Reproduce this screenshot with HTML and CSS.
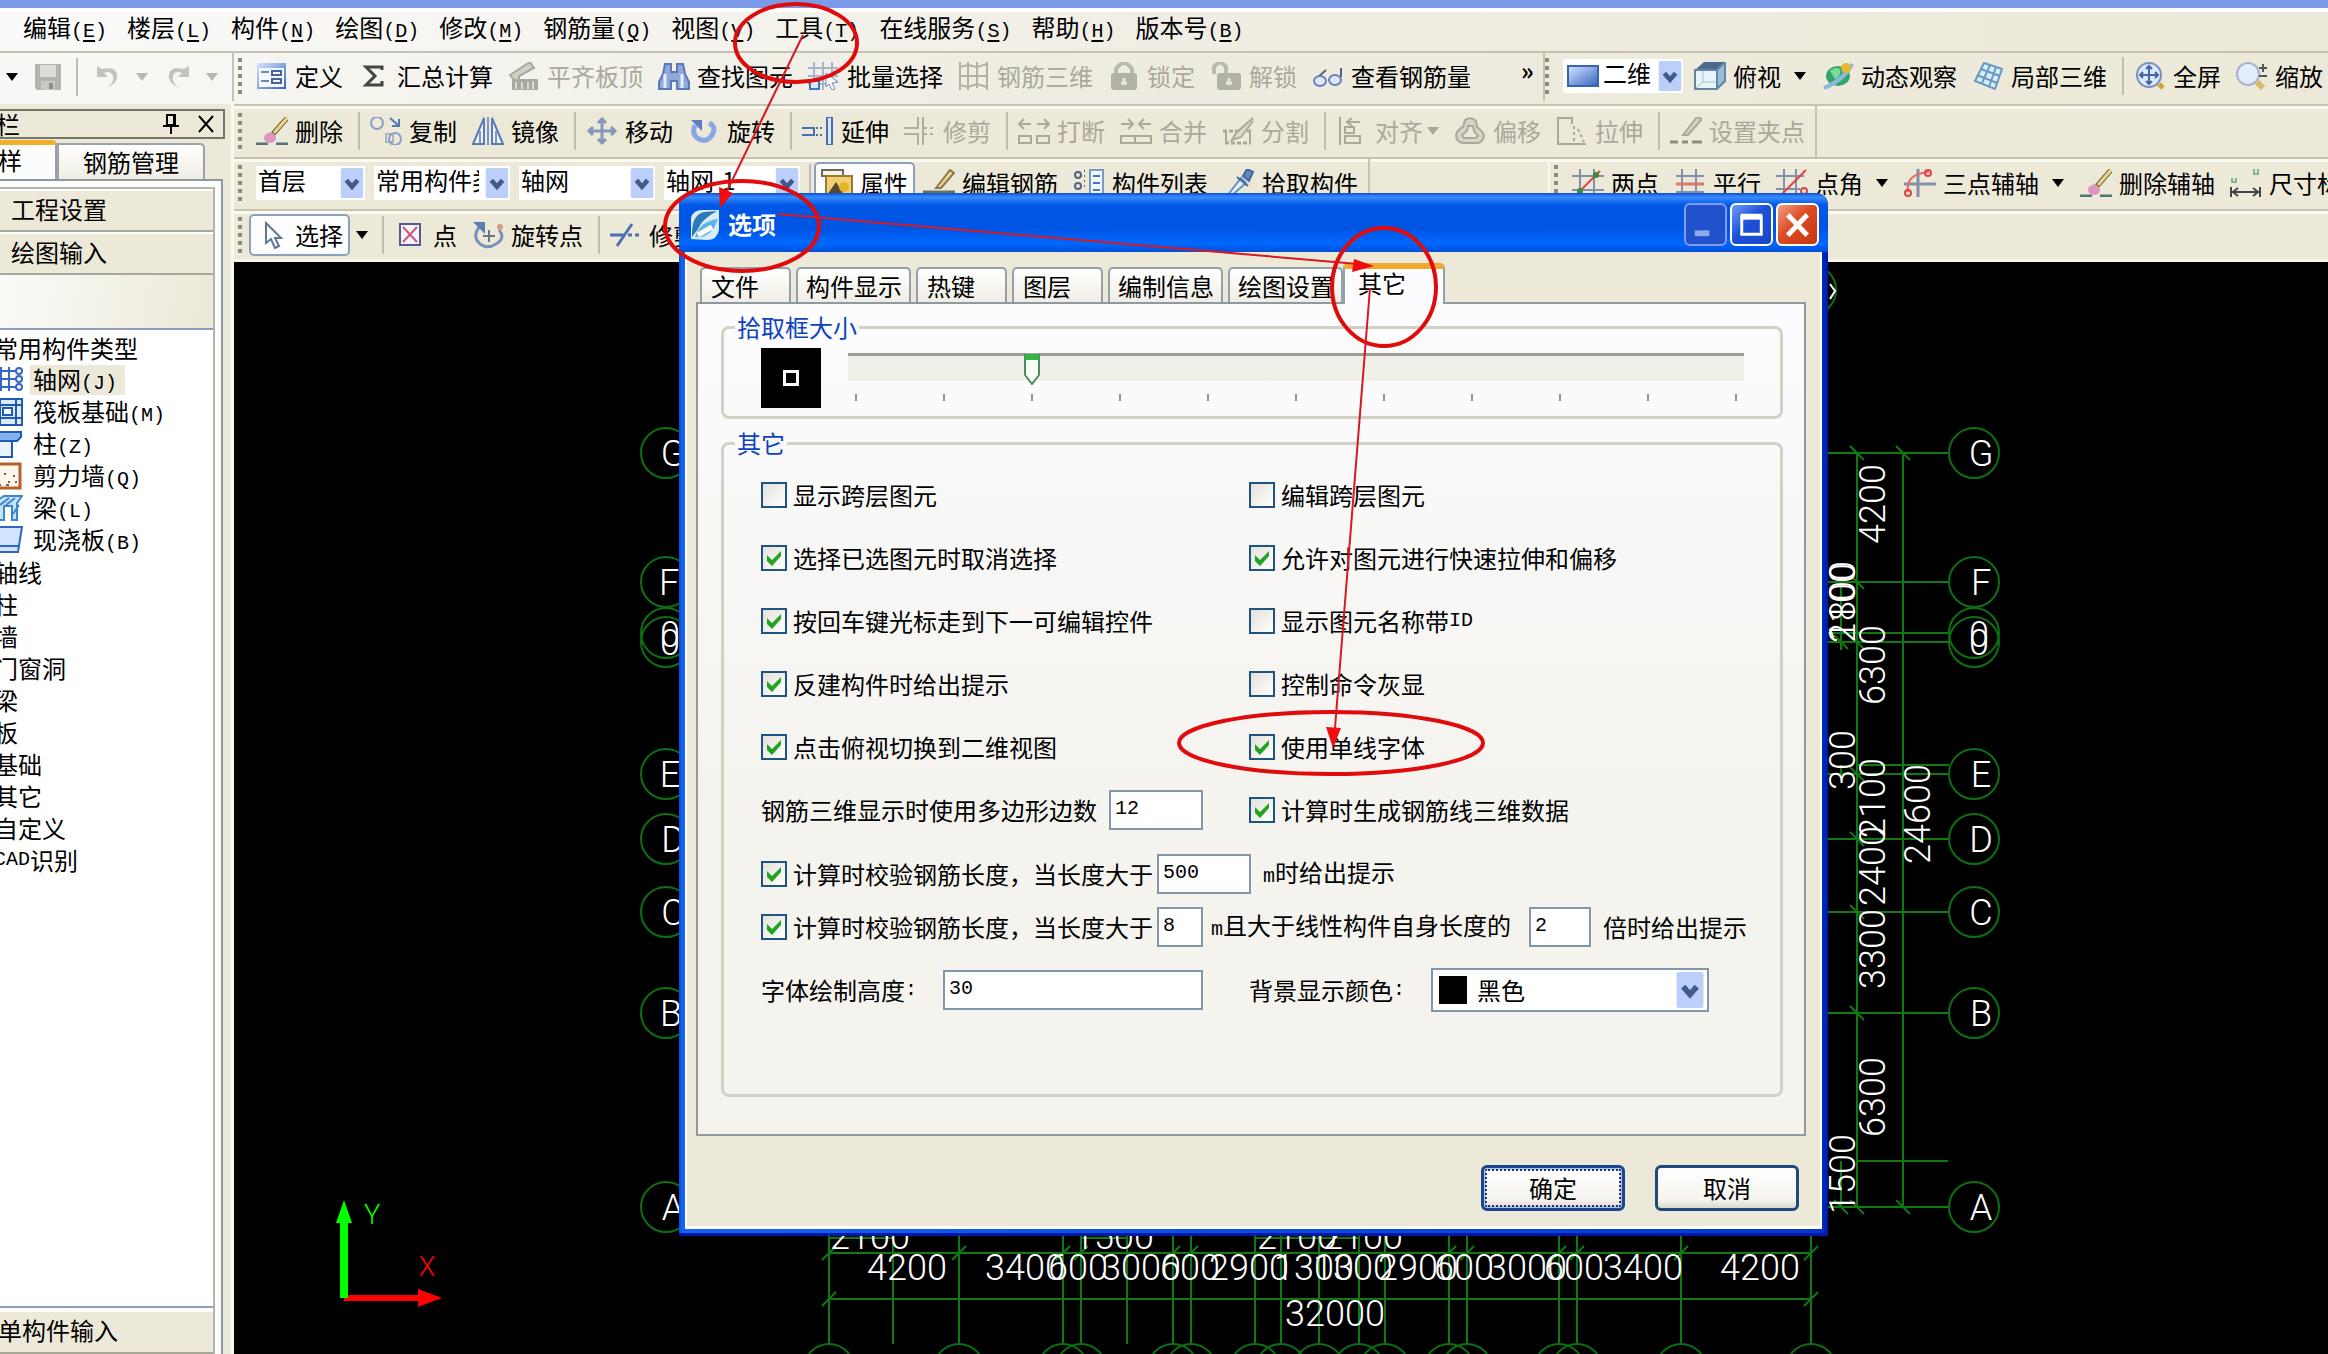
FILE: index.html
```html
<!DOCTYPE html>
<html lang="zh-CN">
<head>
<meta charset="utf-8">
<title>选项</title>
<link rel="stylesheet" href="styles.css">
</head>
<body>
<svg class="defs" aria-hidden="true">
  <defs>
    <linearGradient id="g-blue" x1="0" y1="0" x2="1" y2="1"><stop offset="0" stop-color="#d6e6ff"/><stop offset="1" stop-color="#3563c0"/></linearGradient>
  </defs>
  <symbol id="i-save" viewBox="0 0 32 28"><path d="M3 1h26v26H5l-2-2z" fill="#b4b4af"/><path d="M8 2h16v12H8z" fill="#dcdcd8"/><path d="M9 18h14v9H9z" fill="#c8c8c4"/><path d="M17 20h4v6h-4z" fill="#8e8e8a"/></symbol>
  <symbol id="i-undo" viewBox="0 0 32 28"><path d="M5 3v11h11l-4-4q7-3 9 3t-6 12q12-6 10-14T10 6z" fill="#c2c2bd"/></symbol>
  <symbol id="i-redo" viewBox="0 0 32 28"><path d="M27 3v11H16l4-4q-7-3-9 3t6 12Q5 19 7 11T22 6z" fill="#c2c2bd"/></symbol>
  <symbol id="i-define" viewBox="0 0 32 28"><path d="M1 1h29v26H1z" fill="url(#g-blue)"/><path d="M3 6h25v19H3z" fill="#f4f8ff"/><path d="M5 10h8m-8 9h8" stroke="#6d87bd" stroke-width="2"/><path d="M16 9h9v4h-9zm0 8h9v4h-9z" fill="none" stroke="#48629c" stroke-width="2"/></symbol>
  <symbol id="i-sigma" viewBox="0 0 32 28"><path d="M24 8V5H8l9 9-9 9h16v-4" fill="none" stroke="#444" stroke-width="3"/></symbol>
  <symbol id="i-slab" viewBox="0 0 32 28"><path d="M2 13 22 0l4 6-15 8v4H6z" fill="#d2d0c4" stroke="#a9a89c" stroke-width="2"/><path d="M4 17h26v11H4z" fill="#aaa99f"/><path d="M8 20v7m6-7v7m6-7v7m5-8v8" stroke="#dddbd0" stroke-width="2"/></symbol>
  <symbol id="i-find" viewBox="0 0 32 28"><path d="M7 2h6v8h6V2h6l2 10 4 8v7H19v-8h-6v8H1v-7l4-8z" fill="#8fa9dc" stroke="#5a78b4" stroke-width="2"/><path d="M7 12v14m17-14v14" stroke="#e3edff" stroke-width="3"/></symbol>
  <symbol id="i-batch" viewBox="0 0 32 28"><path d="M6 0v28M15 0v28M24 0v20M0 6h30M0 14h30M0 22h20" stroke="#a8b4cc" stroke-width="2"/><path d="M2 19h9v8H2z" fill="#dbe8ff" stroke="#4674c4" stroke-width="2"/><path d="m18 11 12 9-6 1 3 6-3 1-3-6-3 3z" fill="#fff" stroke="#6d87b8"/></symbol>
  <symbol id="i-rebar" viewBox="0 0 32 28"><path d="M2 0v28M10 0v28M19 0v26M29 0v28M2 5l8-2 9 2 10-3M2 14h27M2 23l8 2 9-3 10 3" fill="none" stroke="#b3b1a6" stroke-width="2"/></symbol>
  <symbol id="i-lock" viewBox="0 0 32 28"><path d="M8 12V7q8-12 16 0v5" fill="none" stroke="#bab9b0" stroke-width="4"/><rect x="3" y="11" width="26" height="17" rx="3" fill="#b2b1a8"/><path d="M16 16v7m-3-2h6" stroke="#e8e6da" stroke-width="3"/></symbol>
  <symbol id="i-unlock" viewBox="0 0 32 28"><path d="M4 12V5q6-9 12 0v6" fill="none" stroke="#bab9b0" stroke-width="4"/><rect x="7" y="11" width="24" height="17" rx="3" fill="#b2b1a8"/><path d="M19 16v7m-3-2h6" stroke="#e8e6da" stroke-width="3"/></symbol>
  <symbol id="i-glasses" viewBox="0 0 32 28"><path d="m14 8-9 8M29 6v9" stroke="#54608c" stroke-width="2"/><ellipse cx="8" cy="19" rx="6" ry="5" fill="#dde7ff" stroke="#6a7fb8" stroke-width="2"/><ellipse cx="23" cy="18" rx="6" ry="5" fill="#dde7ff" stroke="#6a7fb8" stroke-width="2"/></symbol>
  <symbol id="i-screen" viewBox="0 0 32 28"><path d="M1 4h30v20H1z" fill="url(#g-blue)" stroke="#3864b2" stroke-width="2"/></symbol>
  <symbol id="i-cube" viewBox="0 0 32 28"><path d="M1 8 10 0h21l-8 8z" fill="#4b6a8e"/><path d="M1 8h22v19H1z" fill="#e7f5fa" stroke="#64869e" stroke-width="2"/><path d="m23 8 8-8v19l-8 8z" fill="#93bfd8" stroke="#64869e" stroke-width="2"/><path d="M9 9v11l-7 6m7-6h13" stroke="#9fc2d2" fill="none"/></symbol>
  <symbol id="i-orbit" viewBox="0 0 32 28"><ellipse cx="16" cy="14" rx="12" ry="10" fill="#35a56a"/><path d="M8 9q8-6 10-1t-5 9z" fill="#7bdc9d"/><path d="M2 26Q22 18 30 2" stroke="#8fb6dc" stroke-width="4" fill="none"/><circle cx="24" cy="6" r="5" fill="#e8b832"/></symbol>
  <symbol id="i-local" viewBox="0 0 32 28"><path d="m12 1 18 6-7 20-20-8z" fill="#d6f0fb" stroke="#6b98c0" stroke-width="2"/><path d="m18 3-8 18m14-16-7 20M9 7l19 7M5 13l20 8" stroke="#6b98c0" stroke-width="2"/></symbol>
  <symbol id="i-full" viewBox="0 0 32 28"><circle cx="15" cy="13" r="12" fill="#dce8fb" stroke="#7890bc" stroke-width="2"/><path d="M15 4v18M6 13h18m-12-6 3-3 3 3m-6 12 3 3 3-3M9 10l-3 3 3 3m12-6 3 3-3 3" fill="none" stroke="#4465a4" stroke-width="2"/><path d="m25 22 4 4" stroke="#d2a23c" stroke-width="5"/></symbol>
  <symbol id="i-zoom" viewBox="0 0 32 28"><circle cx="12" cy="12" r="11" fill="#e3eefc" stroke="#a5b4cc" stroke-width="2"/><path d="m21 20 6 6" stroke="#d8b860" stroke-width="6"/><path d="M27 2v8m-4-4h8m-8 8h8" stroke="#555" stroke-width="2"/></symbol>
  <symbol id="i-erase" viewBox="0 0 32 28"><path d="M0 27h12m8 0h12" stroke="#4d777b" stroke-width="3"/><path d="M31 1 17 17" stroke="#6e6337" stroke-width="5"/><path d="M31 1 18 16" stroke="#ecd58c" stroke-width="3"/><path d="m14 15 6 5-4 4-7-5z" fill="#8ba6e0"/><ellipse cx="14" cy="21" rx="6" ry="5" fill="#df95c0"/></symbol>
  <symbol id="i-copy" viewBox="0 0 32 28"><circle cx="7" cy="6" r="6" fill="none" stroke="#8ba0c8" stroke-width="2"/><path d="m20 1 9 8m0-7v7h-7" fill="none" stroke="#5076b4" stroke-width="2"/><path d="M16 17h7v8h-7z" fill="none" stroke="#a8b2ca" stroke-width="2"/><circle cx="25" cy="22" r="6" fill="none" stroke="#8ba0c8" stroke-width="2"/></symbol>
  <symbol id="i-mirror" viewBox="0 0 32 28"><path d="M12 1v26H1zM20 1v26h11z" fill="#eaf1ff" stroke="#5a7ab8" stroke-width="2"/><path d="M16 0v28M8 14v12m16-12v12" stroke="#7d95c4" stroke-width="2"/></symbol>
  <symbol id="i-move" viewBox="0 0 32 28"><path d="M16 3v22M4 14h24M12 6l4-4 4 4m-8 16 4 4 4-4M7 10l-4 4 4 4m18-8 4 4-4 4" fill="none" stroke="#8598b8" stroke-width="3"/></symbol>
  <symbol id="i-rotate" viewBox="0 0 32 28"><path d="M7 8q-4 10 4 14t13-4-3-12" fill="none" stroke="#88a6e6" stroke-width="5"/><path d="M3 3h11v11z" fill="#5d7dc4"/></symbol>
  <symbol id="i-extend" viewBox="0 0 32 28"><path d="M0 11h12v7H0" fill="none" stroke="#4a6fb4" stroke-width="2"/><path d="M14 11h8m-8 7h8" stroke="#4a6fb4" stroke-width="2" stroke-dasharray="2"/><path d="M25 0h5v28h-5z" fill="#d8e6ff" stroke="#4a6fb4" stroke-width="2"/></symbol>
  <symbol id="i-trim" viewBox="0 0 32 28"><path d="M0 11h14V0m5 0v28m-5 0V17H0" fill="none" stroke="#b0aea0" stroke-width="2"/><path d="M20 11h12m-12 6h12" stroke="#b0aea0" stroke-width="2" stroke-dasharray="3"/></symbol>
  <symbol id="i-break" viewBox="0 0 32 28"><path d="M1 19h12v7H1zm18 0h12v7H19zM1 7h12M6 2 1 7l5 5m13-5h12m-5-5 5 5-5 5" fill="none" stroke="#aaa99c" stroke-width="2"/></symbol>
  <symbol id="i-merge" viewBox="0 0 32 28"><path d="M1 19h14v7H1zm14 0h16v7H15zM1 7h12M8 2l5 5-5 5m23-5H19m5-5-5 5 5 5" fill="none" stroke="#aaa99c" stroke-width="2"/></symbol>
  <symbol id="i-split" viewBox="0 0 32 28"><path d="M1 14h29M3 26h26" stroke="#aaa99c" stroke-width="3" stroke-dasharray="4 2"/><path d="M31 1 14 16l-4 7 9-3L31 4M4 14v12m24-12v12" fill="#dedbcc" stroke="#aaa99c" stroke-width="2"/></symbol>
  <symbol id="i-align" viewBox="0 0 32 28"><path d="M4 0v28M9 10h9v6H9zm0 9h15v7H9zM10 5h14m-8-4-5 4 5 4" fill="none" stroke="#aaa99c" stroke-width="2"/></symbol>
  <symbol id="i-offset" viewBox="0 0 32 28"><path d="M11 3q6-4 11 1l1 6q6 4 7 9-2 8-9 7H9q-7-1-7-8 2-6 7-8z" fill="#d7d5c9" stroke="#aaa99c" stroke-width="2"/><path d="M14 9h5l1 5 4 5-2 2H10l-2-3 5-4z" fill="#ece9d8" stroke="#aaa99c" stroke-width="2"/></symbol>
  <symbol id="i-stretch" viewBox="0 0 32 28"><path d="M16 7V1H2v26h28" fill="none" stroke="#aaa99c" stroke-width="2"/><path d="M18 9v15m4-12 6 13" stroke="#aaa99c" stroke-width="2" stroke-dasharray="3"/></symbol>
  <symbol id="i-grip" viewBox="0 0 32 28"><path d="m13 18 14-18 5 2-14 16z" fill="#d4d2c6" stroke="#aaa99c" stroke-width="2"/><path d="M0 25h8m4 0h6m4 0h10" stroke="#8f8e84" stroke-width="3"/></symbol>
  <symbol id="i-props" viewBox="0 0 32 28"><path d="M1 1h21v6H1z" fill="#f8f4e8" stroke="#6f685c" stroke-width="2"/><path d="M5 7h26v20H5z" fill="#f0cf73" stroke="#9b7a36" stroke-width="2"/><path d="m6 26 9-13 8 13z" fill="#524a34"/><circle cx="23" cy="18" r="5" fill="#e5b325"/></symbol>
  <symbol id="i-pen" viewBox="0 0 32 28"><path d="M0 23h32" stroke="#68705c" stroke-width="3"/><path d="m13 19 14-18 4 3-13 15z" fill="#efd794" stroke="#89764a" stroke-width="2"/></symbol>
  <symbol id="i-list" viewBox="0 0 32 28"><circle cx="5" cy="6" r="3" fill="none" stroke="#58647c" stroke-width="2"/><circle cx="5" cy="17" r="3" fill="none" stroke="#58647c" stroke-width="2"/><path d="M11 2h1m-1 5h1m-1 5h1m-1 5h1" stroke="#58647c" stroke-width="2"/><path d="M17 1h13v27H17z" fill="#f4f8ff" stroke="#7e98c9" stroke-width="2"/><path d="M20 7h7m-7 7h7m-7 7h7" stroke="#4674c4" stroke-width="2"/></symbol>
  <symbol id="i-pick" viewBox="0 0 32 28"><path d="m4 27 14-18 5 5L8 27z" fill="#e3f1ff" stroke="#6890b8" stroke-width="2"/><path d="m14 8 11 9M20 7l4-7 6 3-4 9z" fill="#5d88c4" stroke="#41689f" stroke-width="2"/></symbol>
  <symbol id="i-two" viewBox="0 0 32 28"><path d="M8 0v28M22 0v28M0 7h32M0 21h32" stroke="#8490aa" stroke-width="2"/><path d="M5 25 28 2" stroke="#d44" stroke-width="2"/><circle cx="8" cy="22" r="3" fill="#398b3d"/><circle cx="24" cy="6" r="3" fill="#398b3d"/></symbol>
  <symbol id="i-parallel" viewBox="0 0 32 28"><path d="M8 0v28M22 0v28M2 7h28M2 23h28" stroke="#8490aa" stroke-width="2"/><path d="M2 15h28" stroke="#d77a6a" stroke-width="3"/></symbol>
  <symbol id="i-angle" viewBox="0 0 32 28"><path d="M8 0v28M20 0v24M0 7h28M0 20h24" stroke="#8490aa" stroke-width="2"/><path d="M4 27 30 1" stroke="#e04444" stroke-width="2"/><circle cx="28" cy="22" r="3" fill="none" stroke="#e04444" stroke-width="2"/></symbol>
  <symbol id="i-three" viewBox="0 0 32 28"><path d="M14 0v28M0 15h32" stroke="#8490aa" stroke-width="3"/><path d="M4 23Q1 5 25 3" fill="none" stroke="#e46b6b" stroke-width="2"/><circle cx="4" cy="24" r="3" fill="none" stroke="#e04444" stroke-width="2"/><circle cx="24" cy="4" r="3" fill="none" stroke="#e04444" stroke-width="2"/></symbol>
  <symbol id="i-dim" viewBox="0 0 32 28"><path d="M1 18v10m29-10v10M2 23h27M8 19l-5 4 5 4m15-8 5 4-5 4" fill="none" stroke="#444" stroke-width="2"/><path d="M2 9v4h4V9m18-9v5h4V0" fill="none" stroke="#7fb889" stroke-width="2"/></symbol>
  <symbol id="i-arrow" viewBox="0 0 32 28"><path d="M10 2v20l5-4 4 9 4-2-4-8h6z" fill="#fff" stroke="#5f7797" stroke-width="2"/></symbol>
  <symbol id="i-point" viewBox="0 0 32 28"><path d="M6 3h20v21H6z" fill="#f6f2fa" stroke="#545a94" stroke-width="2"/><path d="m9 6 14 15m0-15L9 21" stroke="#c85a78" stroke-width="2"/></symbol>
  <symbol id="i-rotpt" viewBox="0 0 32 28"><path d="M8 5q-8 10-1 17t17 1 3-14" fill="none" stroke="#7b90bd" stroke-width="3"/><path d="M1 1h12v12z" fill="#5a7cb4"/><path d="M17 9v12m-6-6h12" stroke="#6b7689" stroke-width="2"/><circle cx="28" cy="6" r="3" fill="#d49b7c"/></symbol>
  <symbol id="i-cut" viewBox="0 0 32 28"><path d="M0 14h14M7 25 22 3" stroke="#4f71b0" stroke-width="3"/><path d="M18 14h14" stroke="#4f71b0" stroke-width="3" stroke-dasharray="4 3"/></symbol>
  <symbol id="i-axis" viewBox="0 0 28 28"><path d="M6 1v24M14 1v24M0 5h22M0 13h22M0 21h22" stroke="#3568c8" stroke-width="2"/><g fill="#fff" stroke="#3568c8" stroke-width="2"><circle cx="24" cy="5" r="3"/><circle cx="24" cy="13" r="3"/><circle cx="24" cy="21" r="3"/></g></symbol>
  <symbol id="i-raft" viewBox="0 0 28 28"><path d="M0 1h27v26H0M0 7h27M0 20h27M5 1v26m16-26v26" fill="#dcebff" stroke="#1f5cb0" stroke-width="2"/><path d="M8 10h9v7H8z" fill="#fff" stroke="#1f5cb0" stroke-width="2"/></symbol>
  <symbol id="i-column" viewBox="0 0 28 28"><path d="M0 2h26v5l-4 4H2z" fill="#83b3ee" stroke="#1f5cb0" stroke-width="2"/><path d="M4 11h13v16H4z" fill="#e9f3ff" stroke="#1f5cb0" stroke-width="2"/></symbol>
  <symbol id="i-wall" viewBox="0 0 28 28"><path d="M0 2h25v24H0" fill="#fff7ee" stroke="#b4622c" stroke-width="3"/><path d="M3 18h2m4-6h2m2 8h2m3-6h2m-9 9h3m6-3h2M4 23h2" stroke="#8c5c3c" stroke-width="2"/></symbol>
  <symbol id="i-beam" viewBox="0 0 28 28"><path d="m0 8 9-6h18l-5 7v17h-5V12H9v14H4V13H0z" fill="#c4e4fb" stroke="#3c86cc" stroke-width="2"/><path d="m5 11 9-7m-3 7 9-7M18 20l6-9" stroke="#3c86cc" stroke-width="2"/></symbol>
  <symbol id="i-slab2" viewBox="0 0 28 28"><path d="M0 1h27l-4 25H0z" fill="#d0e3ff" stroke="#2e66c0" stroke-width="2"/><path d="M0 20h24" stroke="#2e66c0" stroke-width="2"/></symbol>
  <symbol id="i-down" viewBox="0 0 12 8"><path d="M0 0h12L6 8z" fill="currentColor"/></symbol>
  <symbol id="i-chev" viewBox="0 0 24 32"><rect width="24" height="32" rx="2" fill="#bccffb"/><path d="m6 13 6 7 6-7" fill="none" stroke="#405b89" stroke-width="5"/></symbol>
</svg>

<div class="app">
  <div class="strip"></div>
  <nav class="menu">
    <a href="#">编辑<span class="en">(<u>E</u>)</span></a><a href="#">楼层<span class="en">(<u>L</u>)</span></a><a href="#">构件<span class="en">(<u>N</u>)</span></a><a href="#">绘图<span class="en">(<u>D</u>)</span></a><a href="#">修改<span class="en">(<u>M</u>)</span></a><a href="#">钢筋量<span class="en">(<u>Q</u>)</span></a><a href="#">视图<span class="en">(<u>V</u>)</span></a><a href="#">工具<span class="en">(<u>T</u>)</span></a><a href="#">在线服务<span class="en">(<u>S</u>)</span></a><a href="#">帮助<span class="en">(<u>H</u>)</span></a><a href="#">版本号<span class="en">(<u>B</u>)</span></a>
  </nav>

  <div class="row top">
    <div class="quick">
      <svg class="dn"><use href="#i-down"/></svg>
      <button class="tool off" aria-label="保存"><svg><use href="#i-save"/></svg></button>
      <i class="sep"></i>
      <button class="tool off" aria-label="撤销"><svg><use href="#i-undo"/></svg></button>
      <svg class="dn off"><use href="#i-down"/></svg>
      <button class="tool off" aria-label="重做"><svg><use href="#i-redo"/></svg></button>
      <svg class="dn off"><use href="#i-down"/></svg>
    </div>
    <div class="bar">
      <i class="handle"></i>
      <button class="tool"><svg><use href="#i-define"/></svg>定义</button>
      <button class="tool"><svg><use href="#i-sigma"/></svg>汇总计算</button>
      <button class="tool off"><svg><use href="#i-slab"/></svg>平齐板顶</button>
      <button class="tool"><svg><use href="#i-find"/></svg>查找图元</button>
      <button class="tool"><svg><use href="#i-batch"/></svg>批量选择</button>
      <button class="tool off"><svg><use href="#i-rebar"/></svg>钢筋三维</button>
      <button class="tool off"><svg><use href="#i-lock"/></svg>锁定</button>
      <button class="tool off"><svg><use href="#i-unlock"/></svg>解锁</button>
      <button class="tool"><svg><use href="#i-glasses"/></svg>查看钢筋量</button>
      <button class="more">»</button>
    </div>
    <div class="bar rest flush">
      <i class="handle"></i>
      <div class="combo view"><svg class="pic"><use href="#i-screen"/></svg><select aria-label="视图模式"><option>二维</option></select><svg class="chev"><use href="#i-chev"/></svg></div>
      <button class="tool"><svg><use href="#i-cube"/></svg>俯视<svg class="dn"><use href="#i-down"/></svg></button>
      <button class="tool"><svg><use href="#i-orbit"/></svg>动态观察</button>
      <button class="tool"><svg><use href="#i-local"/></svg>局部三维</button>
      <i class="sep"></i>
      <button class="tool"><svg><use href="#i-full"/></svg>全屏</button>
      <button class="tool"><svg><use href="#i-zoom"/></svg>缩放</button>
    </div>
  </div>

  <div class="body">
    <aside class="side">
      <header class="side-head"><span class="cut">栏</span>
        <svg class="pin" viewBox="0 0 52 24"><path d="M4 3h8v10H4zM0 14h16M8 14v8M11 3v10" fill="none" stroke="#000" stroke-width="2"/><path d="m36 4 14 16m0-16L36 20" stroke="#000" stroke-width="2"/></svg>
      </header>
      <div class="side-tabs"><button class="active">样</button><button>钢筋管理</button></div>
      <div class="side-panel"><div class="side-inner">
        <button class="fold">工程设置</button>
        <button class="fold">绘图输入</button>
        <div class="band"></div>
        <ul class="tree">
          <li>常用构件类型</li>
          <li class="sub"><svg><use href="#i-axis"/></svg><span class="sel">轴网<span class="en">(J)</span></span></li>
          <li class="sub"><svg><use href="#i-raft"/></svg><span>筏板基础<span class="en">(M)</span></span></li>
          <li class="sub"><svg><use href="#i-column"/></svg><span>柱<span class="en">(Z)</span></span></li>
          <li class="sub"><svg><use href="#i-wall"/></svg><span>剪力墙<span class="en">(Q)</span></span></li>
          <li class="sub"><svg><use href="#i-beam"/></svg><span>梁<span class="en">(L)</span></span></li>
          <li class="sub"><svg><use href="#i-slab2"/></svg><span>现浇板<span class="en">(B)</span></span></li>
          <li>轴线</li><li>柱</li><li>墙</li><li>门窗洞</li><li>梁</li><li>板</li><li>基础</li><li>其它</li><li>自定义</li><li><span class="en">CAD</span>识别</li>
        </ul>
        <button class="fold last"><span>单构件输入</span></button>
      </div></div>
    </aside>

    <main class="work">
      <div class="row">
        <div class="bar end">
          <i class="handle"></i>
          <button class="tool"><svg><use href="#i-erase"/></svg>删除</button><i class="sep"></i>
          <button class="tool"><svg><use href="#i-copy"/></svg>复制</button>
          <button class="tool"><svg><use href="#i-mirror"/></svg>镜像</button><i class="sep"></i>
          <button class="tool"><svg><use href="#i-move"/></svg>移动</button>
          <button class="tool"><svg><use href="#i-rotate"/></svg>旋转</button><i class="sep"></i>
          <button class="tool"><svg><use href="#i-extend"/></svg>延伸</button>
          <button class="tool off"><svg><use href="#i-trim"/></svg>修剪</button><i class="sep"></i>
          <button class="tool off"><svg><use href="#i-break"/></svg>打断</button>
          <button class="tool off"><svg><use href="#i-merge"/></svg>合并</button>
          <button class="tool off"><svg><use href="#i-split"/></svg>分割</button><i class="sep"></i>
          <button class="tool off tight"><svg><use href="#i-align"/></svg>对齐<svg class="dn"><use href="#i-down"/></svg></button>
          <button class="tool off"><svg><use href="#i-offset"/></svg>偏移</button>
          <button class="tool off"><svg><use href="#i-stretch"/></svg>拉伸</button><i class="sep"></i>
          <button class="tool off"><svg><use href="#i-grip"/></svg>设置夹点</button>
        </div>
      </div>
      <div class="row split">
        <div class="bar end">
          <i class="handle"></i>
          <div class="combo short"><select aria-label="楼层"><option>首层</option></select><svg class="chev"><use href="#i-chev"/></svg></div>
          <div class="combo"><select aria-label="构件类型"><option>常用构件类型</option></select><svg class="chev"><use href="#i-chev"/></svg></div>
          <div class="combo"><select aria-label="构件"><option>轴网</option></select><svg class="chev"><use href="#i-chev"/></svg></div>
          <div class="combo"><select aria-label="构件名称"><option>轴网-1</option></select><svg class="chev"><use href="#i-chev"/></svg></div>
          <i class="sep"></i>
          <button class="tool pressed"><svg><use href="#i-props"/></svg>属性</button>
          <button class="tool"><svg><use href="#i-pen"/></svg>编辑钢筋</button>
          <button class="tool"><svg><use href="#i-list"/></svg>构件列表</button>
          <button class="tool"><svg><use href="#i-pick"/></svg>拾取构件</button>
        </div>
        <div class="bar axes">
          <i class="handle"></i>
          <button class="tool"><svg><use href="#i-two"/></svg>两点</button>
          <button class="tool"><svg><use href="#i-parallel"/></svg>平行</button>
          <button class="tool"><svg><use href="#i-angle"/></svg>点角<svg class="dn"><use href="#i-down"/></svg></button>
          <button class="tool"><svg><use href="#i-three"/></svg>三点辅轴<svg class="dn"><use href="#i-down"/></svg></button>
          <button class="tool"><svg><use href="#i-erase"/></svg>删除辅轴</button>
          <button class="tool"><svg><use href="#i-dim"/></svg>尺寸标注</button>
        </div>
      </div>
      <div class="row last">
        <div class="bar">
          <i class="handle"></i>
          <button class="tool pressed"><svg><use href="#i-arrow"/></svg>选择</button><svg class="dn"><use href="#i-down"/></svg><i class="sep"></i>
          <button class="tool"><svg><use href="#i-point"/></svg>点</button>
          <button class="tool"><svg><use href="#i-rotpt"/></svg>旋转点</button><i class="sep"></i>
          <button class="tool"><svg><use href="#i-cut"/></svg>修剪</button>
        </div>
      </div>

      <div class="canvas">
        <svg class="drawing" width="2094" height="1092" viewBox="234 262 2094 1092">
          <g class="ln">
            <path d="M1828 453h121M1828 582h121M1828 633h121M1828 642h121M1857 765h92M1828 774h121M1828 839h121M1828 912h121M1828 1013h121M1857 1161h91M1828 1207h121M1857 453v754M1903 453v754"/>
            <path d="M1841 582v68M1841 765v16M1841 1161v46M1850 446l14 14M1896 446l14 14M1850 575l14 14M1850 635l14 14M1850 767l14 14M1850 832l14 14M1850 905l14 14M1850 1006l14 14M1850 1200l14 14M1896 1200l14 14M1834 635l14 14M1834 1200l14 14"/>
            <path d="M829 1253h982M829 1299h982M829 1230v114M893 1230v114M959 1230v114M1063 1230v114M1081 1230v114M1127 1230v114M1173 1230v114M1191 1230v114M1255 1230v114M1281 1230v114M1319 1230v114M1359 1230v114M1385 1230v114M1449 1230v114M1467 1230v114M1559 1230v114M1577 1230v114M1681 1230v114M1811 1230v114"/>
            <path d="M822 1260l14-14M822 1306l14-14M952 1260l14-14M1056 1260l14-14M1074 1260l14-14M1166 1260l14-14M1184 1260l14-14M1442 1260l14-14M1460 1260l14-14M1552 1260l14-14M1570 1260l14-14M1674 1260l14-14M1804 1260l14-14M1804 1306l14-14M829 1238h64M1081 1238h46M1255 1238h104"/>
          </g>
          <g class="bub">
            <circle cx="1811" cy="290" r="25"/>
            <circle cx="1974" cy="453" r="25"/><circle cx="1974" cy="582" r="25"/><circle cx="1974" cy="633" r="25"/><circle cx="1974" cy="642" r="25"/><circle cx="1974" cy="774" r="25"/><circle cx="1974" cy="839" r="25"/><circle cx="1974" cy="912" r="25"/><circle cx="1974" cy="1013" r="25"/><circle cx="1974" cy="1207" r="25"/>
            <circle cx="666" cy="453" r="25"/><circle cx="666" cy="582" r="25"/><circle cx="666" cy="633" r="25"/><circle cx="666" cy="642" r="25"/><circle cx="666" cy="774" r="25"/><circle cx="666" cy="839" r="25"/><circle cx="666" cy="912" r="25"/><circle cx="666" cy="1013" r="25"/><circle cx="666" cy="1207" r="25"/>
            <circle cx="829" cy="1369" r="25"/><circle cx="959" cy="1369" r="25"/><circle cx="1063" cy="1369" r="25"/><circle cx="1081" cy="1369" r="25"/><circle cx="1173" cy="1369" r="25"/><circle cx="1191" cy="1369" r="25"/><circle cx="1255" cy="1369" r="25"/><circle cx="1281" cy="1369" r="25"/><circle cx="1319" cy="1369" r="25"/><circle cx="1359" cy="1369" r="25"/><circle cx="1385" cy="1369" r="25"/><circle cx="1449" cy="1369" r="25"/><circle cx="1467" cy="1369" r="25"/><circle cx="1559" cy="1369" r="25"/><circle cx="1577" cy="1369" r="25"/><circle cx="1681" cy="1369" r="25"/><circle cx="1811" cy="1369" r="25"/>
          </g>
          <path d="M1830 284l5 7-5 8" fill="none" stroke="#fff" stroke-width="2"/>
          <g class="num">
            <text x="1981" y="466">G</text><text x="1981" y="595">F</text><text x="1979" y="647">0</text><text x="1979" y="655">0</text><text x="1981" y="787">E</text><text x="1981" y="852">D</text><text x="1981" y="925">C</text><text x="1981" y="1026">B</text><text x="1981" y="1220">A</text>
            <text x="673" y="466">G</text><text x="669" y="595">F</text><text x="670" y="647">0</text><text x="670" y="655">0</text><text x="670" y="787">E</text><text x="673" y="852">D</text><text x="673" y="925">C</text><text x="671" y="1026">B</text><text x="673" y="1220">A</text>
            <text x="907" y="1280">4200</text><text x="1025" y="1280">3400</text><text x="1078" y="1280">600</text><text x="1141" y="1280">3000</text><text x="1190" y="1280">600</text><text x="1249" y="1280">2900</text><text x="1314" y="1280">1300</text><text x="1353" y="1280">1300</text><text x="1418" y="1280">2900</text><text x="1464" y="1280">600</text><text x="1527" y="1280">3000</text><text x="1574" y="1280">600</text><text x="1643" y="1280">3400</text><text x="1760" y="1280">4200</text>
            <text x="870" y="1249">2100</text><text x="1114" y="1249">1500</text><text x="1297" y="1249">2100</text><text x="1363" y="1249">2100</text><text x="1335" y="1326">32000</text>
            <text transform="translate(1885 504) rotate(-90)">4200</text><text transform="translate(1855 601) rotate(-90)">1800</text><text transform="translate(1855 603) rotate(-90)">2100</text><text transform="translate(1885 665) rotate(-90)">6300</text><text transform="translate(1855 760) rotate(-90)">300</text><text transform="translate(1885 798) rotate(-90)">2100</text><text transform="translate(1885 866) rotate(-90)">2400</text><text transform="translate(1885 949) rotate(-90)">3300</text><text transform="translate(1885 1097) rotate(-90)">6300</text><text transform="translate(1855 1174) rotate(-90)">1500</text><text transform="translate(1930 814) rotate(-90)">24600</text>
          </g>
          <path d="M348 1295h70v-6l24 9-24 9v-6h-74v-3z" fill="#f00"/>
          <path d="M340 1298v-75h-4l8-23 8 23h-4v75z" fill="#0f0"/>
          <text class="axis" x="372" y="1224" fill="#0f0">Y</text><text class="axis" x="427" y="1276" fill="#f00">X</text>
        </svg>
      </div>
    </main>
  </div>

  <section class="dialog" role="dialog" aria-labelledby="dlg-title">
    <header class="title">
      <svg class="logo" viewBox="0 0 30 32"><path d="M1 30V9Q3 1 12 1h17v20q-2 10-12 10z" fill="#d9ecff"/><path d="M2 28Q1 6 14 3l13-1Q12 10 8 20z" fill="#2a79b8"/><path d="M5 28Q10 12 28 10l-4 9Q16 30 5 28z" fill="#5db4e8"/><path d="m8 26 14-8" stroke="#fff" stroke-width="5"/></svg>
      <h1 id="dlg-title">选项</h1>
      <button class="wb min" aria-label="最小化"><svg viewBox="0 0 40 40"><path d="M9 29h15" stroke="#8fa9ea" stroke-width="6"/></svg></button>
      <button class="wb" aria-label="最大化"><svg viewBox="0 0 40 40"><path d="M10 12h20v18H10z" fill="none" stroke="#fff" stroke-width="3"/><path d="M9 12h22" stroke="#fff" stroke-width="6"/></svg></button>
      <button class="wb close" aria-label="关闭"><svg viewBox="0 0 40 40"><path d="m10 10 20 21m0-21L10 31" stroke="#fff" stroke-width="5"/></svg></button>
    </header>
    <div class="content">
      <div class="tabs" role="tablist">
        <button role="tab">文件</button><button role="tab" class="wide">构件显示</button><button role="tab">热键</button><button role="tab">图层</button><button role="tab" class="wide">编制信息</button><button role="tab" class="wide">绘图设置</button><button role="tab" class="on" aria-selected="true">其它</button>
      </div>
      <div class="page">
        <fieldset class="pickbox">
          <legend>拾取框大小</legend>
          <div class="preview"><i></i></div>
          <div class="slide">
            <input type="range" min="0" max="10" value="2" aria-label="拾取框大小">
            <div class="ticks"><i></i><i></i><i></i><i></i><i></i><i></i><i></i><i></i><i></i><i></i><i></i></div>
          </div>
        </fieldset>
        <fieldset class="other">
          <legend>其它</legend>
          <div class="opts">
            <label><input type="checkbox">显示跨层图元</label><label><input type="checkbox">编辑跨层图元</label>
            <label><input type="checkbox" checked>选择已选图元时取消选择</label><label><input type="checkbox" checked>允许对图元进行快速拉伸和偏移</label>
            <label><input type="checkbox" checked>按回车键光标走到下一可编辑控件</label><label><input type="checkbox">显示图元名称带<span class="en">ID</span></label>
            <label><input type="checkbox" checked>反建构件时给出提示</label><label><input type="checkbox">控制命令灰显</label>
            <label><input type="checkbox" checked>点击俯视切换到二维视图</label><label><input type="checkbox" checked>使用单线字体</label>
            <div class="line"><label for="sides">钢筋三维显示时使用多边形边数</label><input id="sides" class="w94 gap12" type="text" value="12"></div><label><input type="checkbox" checked>计算时生成钢筋线三维数据</label>
          </div>
          <div class="line r1"><label><input type="checkbox" checked>计算时校验钢筋长度，当长度大于</label><input class="w94 gap4" type="text" value="500" aria-label="长度上限"><span class="gap12"><span class="en">m</span>时给出提示</span></div>
          <div class="line r2"><label><input type="checkbox" checked>计算时校验钢筋长度，当长度大于</label><input class="w46 gap4" type="text" value="8" aria-label="长度"><span class="gap8"><span class="en">m</span>且大于线性构件自身长度的</span><input class="w62 gap18" type="text" value="2" aria-label="倍数"><span class="gap12">倍时给出提示</span></div>
          <div class="line r3"><label class="fl" for="fh">字体绘制高度<span class="en">:</span></label><input id="fh" class="w260" type="text" value="30"><label class="bl" for="bg">背景显示颜色<span class="en">:</span></label><div class="combo color"><i class="swatch"></i><select id="bg"><option>黑色</option></select><svg class="chev"><use href="#i-chev"/></svg></div></div>
        </fieldset>
      </div>
      <footer class="actions"><button class="btn def">确定</button><button class="btn">取消</button></footer>
    </div>
  </section>

  <svg class="marks" width="1600" height="800" viewBox="0 0 1600 800" aria-hidden="true">
    <g fill="none" stroke="#e00b0b" stroke-width="4"><ellipse cx="796" cy="43" rx="61" ry="39"/><ellipse cx="742" cy="226" rx="77" ry="45"/><ellipse cx="1384" cy="287" rx="52" ry="59"/><ellipse cx="1331" cy="743" rx="152" ry="31"/></g>
    <g fill="none" stroke="#d61a24" stroke-width="2"><path d="M803 35 725 195M778 214l580 50M1370 288l-35 440"/></g>
    <path d="M720 208l-1-21 14 6zM1374 266l-22 6 2-13zM1333 748l-7-21 15 1z" fill="#f00d0d"/>
  </svg>
</div>
</body>
</html>
```
FILE: styles.css
```css
* { box-sizing: border-box; }
html, body { height: 100%; }
body {
  margin: 0;
  overflow: hidden;
  background: #ece9d8;
  color: #000;
  font: 24px/28px "Noto Sans CJK SC", "Liberation Sans", sans-serif;
}
button, input, select { font: inherit; color: inherit; margin: 0; }
button { padding: 0; border: 0; background: none; white-space: nowrap; }
a { color: inherit; text-decoration: none; }
.en, input[type="text"] { font-family: "Liberation Mono", "Noto Sans CJK SC", monospace; font-size: 20px; }
u { text-underline-offset: 3px; }
.defs { position: absolute; width: 0; height: 0; }

.app { position: relative; height: 100%; min-height: 800px; display: flex; flex-direction: column; overflow: hidden; white-space: nowrap; }
.strip { flex: none; height: 12px; background: linear-gradient(#7b9ae8 0 8px, #fff 8px); }
.menu { flex: none; height: 39px; padding: 0 0 4px 23px; display: flex; align-items: center; gap: 20px; background: linear-gradient(90deg, #fafafa, #f0eee4 50%, #ece9d8); }

/* toolbars */
.row { flex: none; height: 53px; display: flex; border-top: 2px solid #c5c2b2; background: linear-gradient(#fbfaf0 0 3px, #ece9d8 3px); }
.row.top { padding-bottom: 3px; background: linear-gradient(90deg, #f8f8f6, #eeece0 50%, #ece9d8); }
.row.split { height: 52px; }
.row.last { border-bottom: 3px solid #f8f6e8; }
.row.last .bar { padding-bottom: 0; }
.bar { display: flex; align-items: center; padding: 0 0 2px 4px; }
.bar.end { border-right: 2px solid #c5c2b2; }
.bar.end .tool:last-child { margin-right: 10px; }
.bar.rest { flex: 1; border-left: 2px solid #c5c2b2; }
.bar.flush { padding-left: 0; }
.bar.axes { flex: 1; margin-left: 178px; border-left: 2px solid #fbfaf0; }
.quick { flex: none; width: 234px; display: flex; align-items: center; padding-left: 6px; border-right: 2px solid #c5c2b2; }
.quick .tool { margin-right: 12px; }
.quick .tool svg { margin-right: 0; }
.quick .sep { margin-right: 14px; }
.handle { flex: none; width: 4px; height: 36px; margin-right: 14px; background: repeating-linear-gradient(#8d8b80 0 4px, transparent 4px 8px); }
.sep { flex: none; width: 2px; height: 38px; margin-right: 10px; background: #c0bdac; }
.tool { flex: none; display: flex; align-items: center; margin-right: 15px; }
.tool svg { width: 32px; height: 28px; margin-right: 7px; }
.tool.off { color: #aaa89c; }
svg.dn, .tool svg.dn { flex: none; width: 12px; height: 8px; margin: 0 1px 0 13px; }
.tool.tight svg.dn { margin: 0 0 0 4px; }
.quick svg.dn { margin: 0 14px 0 0; }
.dn.off { color: #b8b7b0; }
.row.last > .bar > svg.dn { margin: 0 14px 0 -2px; }
.tool.pressed { height: 42px; margin: 0 8px 0 -7px; padding: 0 5px; border: 2px solid #8aa0bd; border-radius: 5px; background: #fdfdfd; }
.more { width: 57px; padding-left: 35px; text-align: left; font-weight: 700; align-self: flex-start; height: 34px; }
.combo { flex: none; display: flex; align-items: center; width: 136px; height: 34px; margin-right: 9px; padding: 0 1px 0 2px; background: #fff; }
.combo.short { width: 109px; }
.combo.view { width: 120px; margin-right: 11px; padding-left: 4px; }
.combo .pic { width: 32px; height: 28px; margin-right: 4px; }
.combo select { flex: 1; min-width: 0; width: 0; height: 28px; align-self: flex-start; padding: 0; border: 0; background: none; appearance: none; outline: 0; }
.combo .chev { flex: none; width: 24px; height: 30px; margin-left: 6px; }

/* left column */
.body { flex: 1; min-height: 0; display: flex; }
.side { flex: none; width: 234px; padding-top: 5px; display: flex; flex-direction: column; overflow: hidden; border-right: 3px solid #fbfaf0; }
.side-head { flex: none; width: 225px; height: 30px; display: flex; align-items: center; justify-content: space-between; border: 2px solid #77756c; border-left: 0; }
.side-head .cut { margin-left: -4px; }
.pin { width: 52px; height: 24px; margin-right: 8px; }
.side-tabs { flex: none; display: flex; align-items: flex-end; height: 40px; }
.side-tabs button { width: 148px; height: 36px; border: 2px solid #97a3ab; border-bottom: 0; border-radius: 0 5px 0 0; background: linear-gradient(#fff, #efede2); }
.side-tabs .active { width: 57px; height: 39px; padding-bottom: 4px; text-align: left; text-indent: -2px; border-left: 0; border-top: 5px solid #f0ae2c; background: #fcfcfc; }
.side-panel { flex: 1; min-height: 0; width: 223px; padding: 6px 6px 0 0; border: 2px solid #8b99a4; border-width: 2px 2px 0 0; background: #fbfbf8; }
.side-inner { height: 100%; display: flex; flex-direction: column; border: 2px solid #b3b4ae; border-width: 2px 2px 0 0; }
.fold { flex: none; height: 43px; padding: 0 0 4px 11px; text-align: left; background: #ece9d8; border-bottom: 2px solid #a7a79c; border-top: 2px solid #fff; }
.fold.last { height: 46px; padding: 0 0 4px; border-top-width: 4px; }
.fold.last span { margin-left: -2px; }
.band { flex: none; height: 53px; background: linear-gradient(100deg, #fafaf8, #ece9d8); }
.tree { flex: 1; min-height: 0; margin: 0; padding: 2px 0 0; list-style: none; overflow: hidden; background: #fff; border: 2px solid #8ba0b6; border-width: 2px 0; }
.tree li { display: flex; align-items: center; height: 32px; margin-left: -6px; }
.tree li.sub { margin-left: -5px; }
.tree svg { width: 28px; height: 28px; margin-right: 7px; }
.tree .sub > span { height: 30px; padding: 0 8px 0 3px; }
.tree .sel { background: #ece9d8; }

.work { flex: 1; min-width: 0; display: flex; flex-direction: column; }
.canvas { flex: 1; min-height: 0; overflow: hidden; background: #000; }
.drawing { display: block; }
.ln { fill: none; stroke: #0f7a14; stroke-width: 2; }
.bub { fill: none; stroke: #0c7012; stroke-width: 2; }
.num { fill: #fff; font: 300 36px Roboto, "Liberation Sans", sans-serif; text-anchor: middle; }
.axis { font: 300 27px Roboto, "Liberation Sans", sans-serif; text-anchor: middle; }

/* options window */
.dialog { position: absolute; left: 679px; top: 193px; width: 1149px; padding: 0 6px 4px; border-radius: 12px 12px 0 0; background: linear-gradient(90deg, #0a48e0, #1464f0 3px, #0438c8 1140px, #0018a8); border-bottom: 3px solid #0018a8; }
.title { display: flex; align-items: center; height: 59px; margin: 0 -6px; padding: 4px 9px 0 11px; border-radius: 12px 12px 0 0; background: linear-gradient(#0a4ed0, #3a8cff 4px, #0058e6 12px, #0054e3 60%, #0068ff 85%, #0050d8); color: #fff; }
.title h1 { flex: 1; margin: 0 0 2px 8px; font-size: 24px; line-height: 28px; font-weight: 700; }
.logo { width: 30px; height: 32px; }
.wb { width: 43px; height: 43px; margin-left: 3px; border: 2px solid #fff; border-radius: 6px; background: linear-gradient(135deg, #6f9cf8, #1c50d8 45%, #1748c8); }
.wb svg { display: block; width: 39px; height: 39px; }
.wb.min { border-color: #7f9df0; background: #2251cc; }
.wb.close { background: linear-gradient(135deg, #f0a083, #dd4a24 45%, #c8360f); }
.content { padding: 11px 14px 15px 9px; background: #ece9d8; border: 1px solid #fff; border-width: 0 2px 3px; }
.tabs { display: flex; align-items: flex-end; height: 39px; padding-left: 4px; gap: 5px; }
.tabs button { width: 91px; height: 35px; padding-left: 9px; text-align: left; border: 2px solid #93a1aa; border-bottom: 0; border-radius: 5px 5px 0 0; background: linear-gradient(#fff, #efede4); }
.tabs .wide { width: 115px; padding: 0 0 0 8px; }
.tabs .on { position: relative; width: 102px; height: 41px; margin: 0 0 -2px -5px; padding: 0 0 8px 13px; border-top: 6px solid #f0a92e; background: #fcfcfe; }
.page { padding: 9px 21px 37px 23px; border: 2px solid #8f9a9e; background: linear-gradient(#fcfcfe, #f4f3ee 60%); }
fieldset { min-width: 0; margin: 0; border: 3px solid #d2d1c6; border-radius: 8px; }
legend { height: 28px; margin-left: -26px; padding: 0 2px; color: #0f42c0; }
.pickbox { display: flex; height: 106px; padding: 7px 36px 0 37px; }
.preview { flex: none; width: 60px; height: 60px; padding: 22px 0 0 22px; background: #000; }
.preview i { display: block; width: 16px; height: 16px; border: 3px solid #fff; }
.slide { flex: 1; margin-left: 27px; padding-top: 5px; }
input[type="range"] { display: block; width: 100%; height: 32px; appearance: none; background: linear-gradient(#9c9b94 0 3px, #f0efe8 3px 28px, transparent 28px); }
input[type="range"]::-webkit-slider-thumb { appearance: none; width: 16px; height: 32px; background: url("data:image/svg+xml,%3Csvg xmlns='http://www.w3.org/2000/svg' viewBox='0 0 16 32'%3E%3Cpath d='M1 2h14v20l-7 9-7-9z' fill='%23f6fbf4' stroke='%234d8a5c' stroke-width='2'/%3E%3Cpath d='M1 1h14v6H1z' fill='%2335b44a'/%3E%3C/svg%3E"); }
.ticks { display: flex; justify-content: space-between; margin: 9px 7px 0; }
.ticks i { width: 2px; height: 7px; background: #98978f; }
.other { height: 668px; margin-top: 10px; padding: 7px 28px 0 37px; }
.opts { display: grid; grid-template-columns: 488px 1fr; grid-auto-rows: 62px; row-gap: 1px; align-items: center; }
label, .line { display: flex; align-items: center; }
input[type="checkbox"] { flex: none; appearance: none; width: 26px; height: 26px; margin-right: 6px; border: 2px solid #1e5382; background: linear-gradient(135deg, #e2e1da, #fff); }
input[type="checkbox"]:checked::after { content: ""; display: block; width: 22px; height: 22px; background: #22a322; clip-path: polygon(4px 8px, 9px 13px, 18px 4px, 18px 9px, 9px 19px, 4px 14px); }
input[type="text"] { flex: none; height: 40px; padding: 0 4px 3px; border: 2px solid #8097ae; border-radius: 0; background: #fff; outline: 0; }
.w46 { width: 46px; } .w62 { width: 62px; } .w94 { width: 94px; } .w260 { width: 260px; }
.gap4 { margin-left: 4px; } .gap8 { margin-left: 8px; } .gap12 { margin-left: 12px; } .gap18 { margin-left: 18px; }
.r1 { height: 66px; } .r2 { height: 40px; } .r3 { height: 86px; }
.fl { width: 182px; }
.bl { width: 182px; margin-left: 46px; }
.combo.color { width: 278px; height: 44px; margin: 0; padding: 0 3px 0 6px; border: 2px solid #8097ae; }
.combo.color select { align-self: center; }
.swatch { width: 28px; height: 28px; margin-right: 10px; background: #000; }
.combo.color .chev { width: 28px; height: 36px; }
.actions { display: flex; justify-content: flex-end; gap: 30px; padding: 29px 7px 0 0; }
.btn { width: 144px; height: 46px; border: 3px solid #1d4a7c; border-radius: 6px; background: linear-gradient(#fff, #f4f3ee 80%, #dcd9cc); }
.btn.def { border-color: #1c4590; outline: 2px dotted #26355c; outline-offset: -6px; box-shadow: inset 0 0 0 2px #a9c2ef; }

.marks { position: absolute; left: 0; top: 0; pointer-events: none; }
```
